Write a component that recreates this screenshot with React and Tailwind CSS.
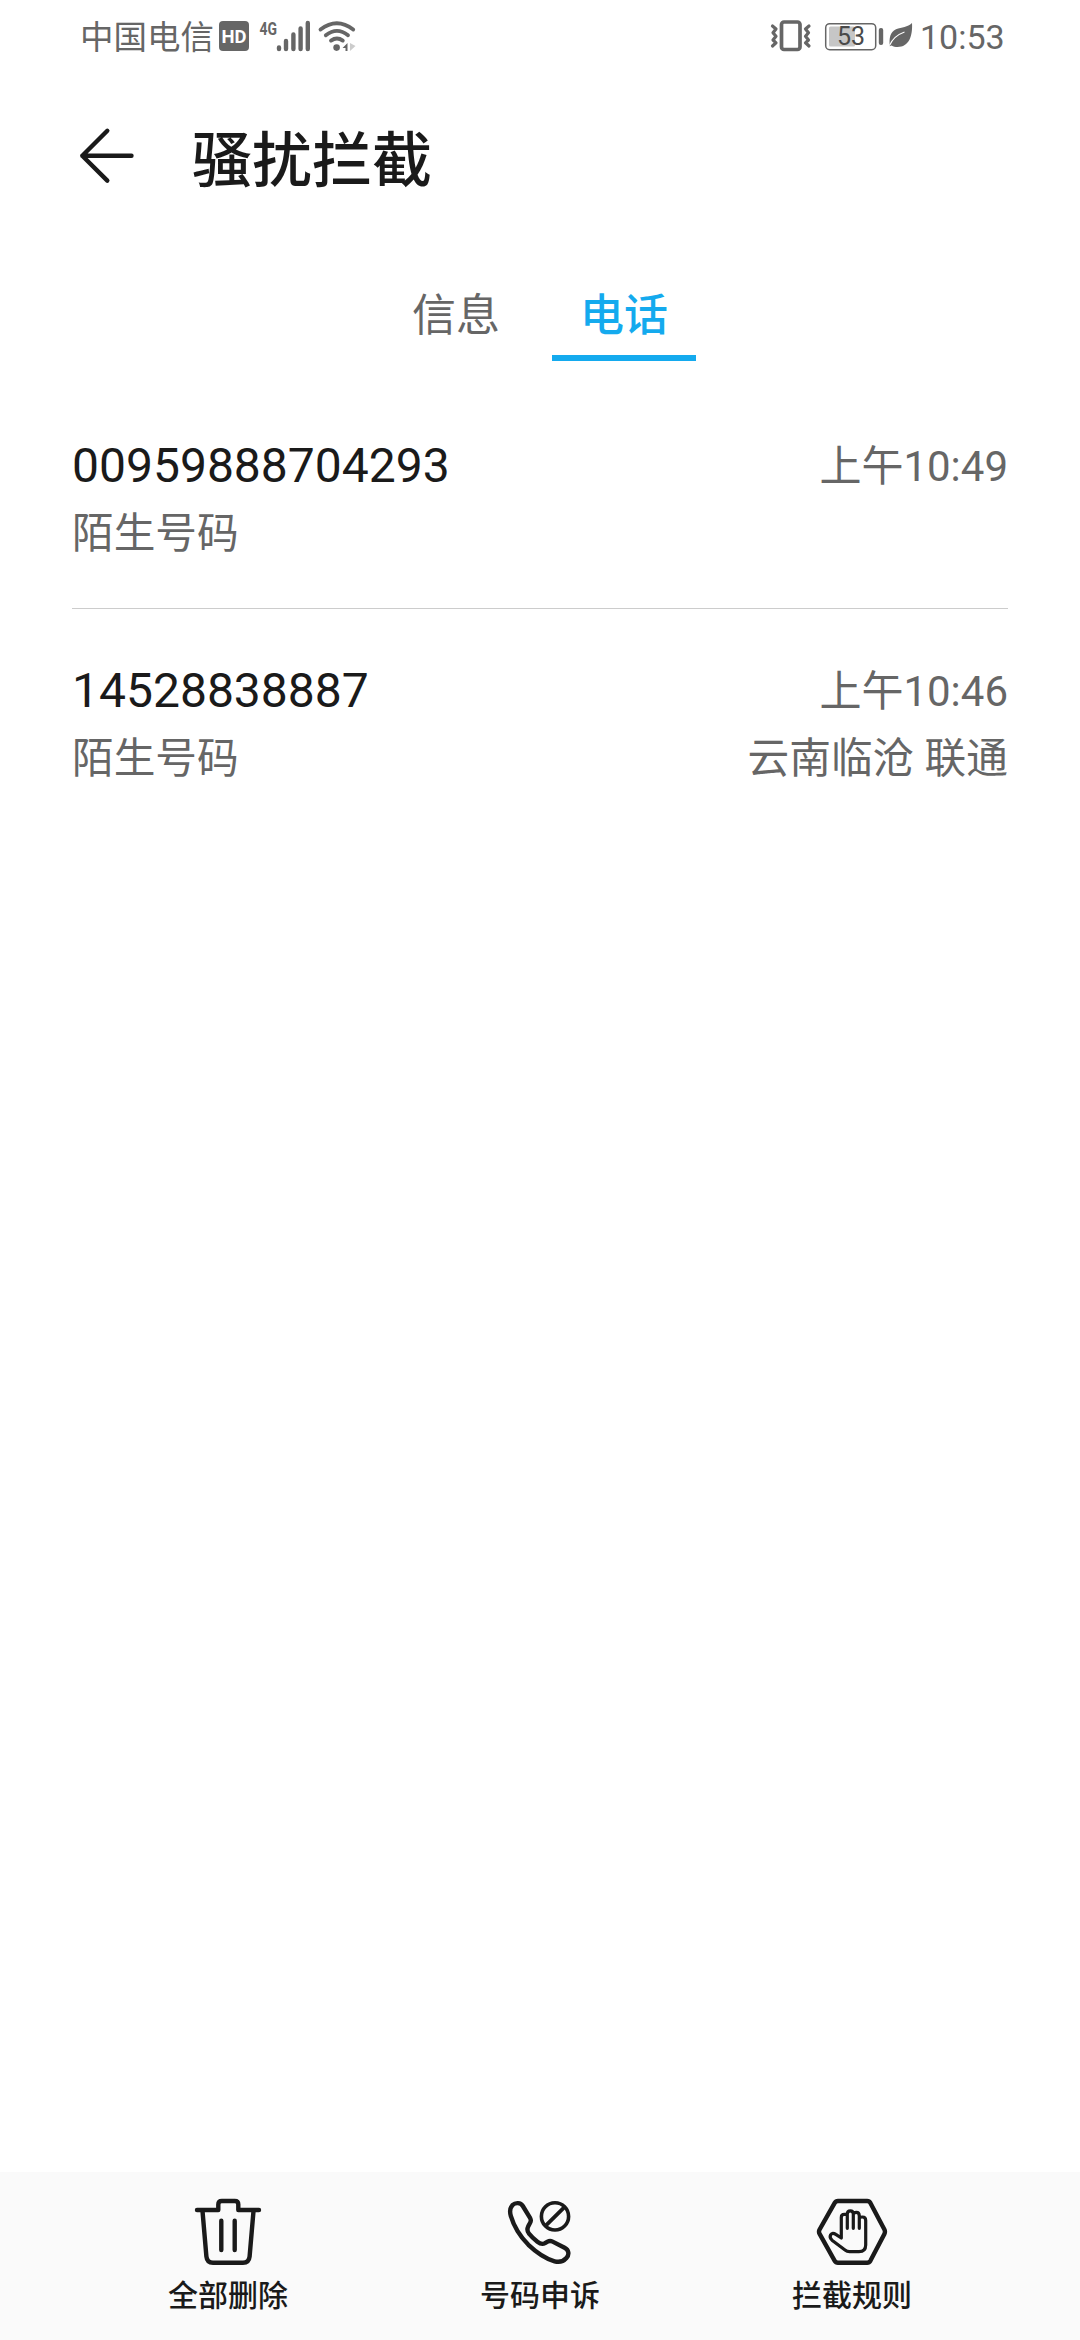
import React, { useState } from 'react';

const tabs = [
  { id: 'sms', label: '信息' },
  { id: 'call', label: '电话' },
];

const calls = [
  { number: '00959888704293', type: '陌生号码', time: '上午10:49', place: '' },
  { number: '14528838887', type: '陌生号码', time: '上午10:46', place: '云南临沧 联通' },
];

const TrashIcon = () => (
  <svg className="size-[72px]" viewBox="0 0 72 72" fill="none" stroke="currentColor" strokeWidth="4.4" strokeLinecap="round" strokeLinejoin="round">
    <path d="M5 14H26.3V8.5Q26.3 5 29.8 5H42.8Q46.3 5 46.3 8.5V14H67" />
    <path d="M10.5 15L14.4 60.5Q15 66.7 21 66.7H51Q57 66.7 57.6 60.5L61.5 15" />
    <path d="M29.3 24.8V54M42.7 24.8V54" />
  </svg>
);

const PhoneBlockIcon = () => (
  <svg className="size-[72px]" viewBox="0 0 72 72" fill="none" stroke="currentColor" strokeWidth="4.4" strokeLinecap="round" strokeLinejoin="round">
    <path d="M8.4 9.2C11.5 6.2 16.6 6.4 18.8 10L26.2 22.2Q27.5 24.6 26 27L24.2 30.4C23 33 23 35.2 25 37.6Q28.6 42 33.4 45.8C36 47.8 38.5 48.6 41 47.2L43.6 45.6Q46 44.3 48.6 45.6L60.6 51.8C64.8 54 65.6 58.4 62.4 62C59.4 65.4 55.4 66.6 50.6 65.3C42 62.8 33 57 24.4 48.8C15.6 39.8 9.6 29.4 6.8 19.8C5.6 15.6 6 11.8 8.4 9.2Z" />
    <circle cx="51" cy="20.4" r="13.6" strokeWidth="3.6" />
    <path d="M42 29.3L60.2 11.3" strokeWidth="3.8" />
  </svg>
);

const HandIcon = () => (
  <svg className="size-[72px]" viewBox="0 0 72 72" fill="none" stroke="currentColor" strokeLinecap="round" strokeLinejoin="round">
    <path strokeWidth="4.4" d="M22 5H51.2Q53.3 5 54.4 6.9L68.4 33.5Q69.5 35.7 68.4 37.9L54.4 64.8Q53.3 66.7 51.2 66.7H22Q19.8 66.7 18.7 64.8L3.6 37.9Q2.4 35.7 3.6 33.5L18.7 6.9Q19.8 5 22 5Z" />
    <path strokeWidth="3.2" d="M25.3 42V21.4Q25.3 18.4 28.3 18.4H31.3M31.3 32.3V18Q31.3 14.8 34.3 14.8T37.3 18V32.3M37.3 18Q37.8 16.4 40.3 16.4Q43.3 16.4 43.3 20V32.3M43.3 21.8Q44 21 46.5 21Q49.7 21 49.7 24.4V49Q49.7 55.6 43 55.6H33.6Q31 55.6 29 54L16 44.2Q13.2 41.6 14.6 38.8Q16.4 36 19.8 38.4L25.3 42" />
  </svg>
);

const actions = [
  { label: '全部删除', Icon: TrashIcon },
  { label: '号码申诉', Icon: PhoneBlockIcon },
  { label: '拦截规则', Icon: HandIcon },
];

const SignalIcons = () => (
  <svg className="h-[72px] w-[142px]" viewBox="216 0 142 72" fill="#666666">
    <rect x="219" y="21" width="30" height="30" rx="4" />
    <text x="234" y="43" fill="#ffffff" fontSize="19" fontWeight="700" textAnchor="middle" textLength="25" lengthAdjust="spacingAndGlyphs">HD</text>
    <text x="259.5" y="34.5" fontSize="19" fontWeight="700" textLength="17.5" lengthAdjust="spacingAndGlyphs">4G</text>
    <g stroke="#666666" strokeWidth="4.4" strokeLinecap="round">
      <path d="M279 47.5V49M286 41V49M293.4 34.5V49M300.6 28.5V49M307.8 23V49" />
    </g>
    <g fill="none" stroke="#666666" strokeWidth="3.8" strokeLinecap="round">
      <path d="M320.5 29.5Q336.8 17 353.2 29.5" />
      <path d="M325.8 35.3Q337 26.5 348 35.3" />
      <path d="M331 40.6Q337 36.5 342.8 40.6" />
    </g>
    <circle cx="336.6" cy="47.6" r="3.3" />
    <path d="M342.5 48L347.5 43V51H345.5V48Z" />
    <path d="M350 43L355.5 46L350 51Z" fill="#cccccc" />
  </svg>
);

const PowerIcons = () => (
  <svg className="h-[72px] w-[152px]" viewBox="768 0 152 72" fill="#666666">
    <g fill="none" stroke="#666666" strokeLinejoin="round" strokeLinecap="round">
      <rect x="781.5" y="22" width="18.5" height="27.5" rx="2.5" strokeWidth="3.7" />
      <path strokeWidth="3.2" d="M772.5 26L776 29L773 32.7L776 36.3L773 40L776 42.8L772.5 46" />
      <path strokeWidth="3.2" d="M809 26L805.5 29L808.5 32.7L805.5 36.3L808.5 40L805.5 42.8L809 46" />
      <rect x="825.7" y="23.7" width="50" height="26" rx="4" strokeWidth="1.5" />
    </g>
    <rect x="829" y="26.5" width="26" height="20" rx="1.5" fill="#c6c6c6" />
    <rect x="878.8" y="28" width="4.4" height="17" rx="2" />
    <text x="851" y="45" fill="#4a4a4a" fontSize="25" textAnchor="middle">53</text>
    <path d="M912 23C912.8 36 909 47 897.5 47C895.5 47 893.2 46.4 891.6 45.4L889.8 46.2C889 38 890 32 896 29.2C902 27 907.5 27.5 912 23Z" />
    <path d="M889.5 45.5C892.5 38.5 897.5 34.500 904.500 32" fill="none" stroke="#ffffff" strokeWidth="1.1" />
  </svg>
);

const StatusBar = () => (
  <div className="flex h-[72px] items-center justify-between pr-[74px] pl-20 text-[#666666]">
    <div className="flex items-center">
      <span className="w-[136px] pt-[3px] text-[33.5px] leading-[72px]">中国电信</span>
      <SignalIcons />
    </div>
    <div className="flex items-center">
      <PowerIcons />
      <span className="w-[86px] pt-0.5 text-[34px] leading-[72px]">10:53</span>
    </div>
  </div>
);

const App = () => {
  const [activeTab, setActiveTab] = useState('call');

  return (
    <div className="flex h-[2340px] w-[1080px] flex-col bg-white font-['Roboto','Noto_Sans_CJK_SC',sans-serif] text-[#1a1a1a]">
      <StatusBar />

      <header className="flex h-[168px] items-center pl-[72px]">
        <button type="button" aria-label="返回">
          <svg className="size-[72px]" viewBox="0 0 72 72" fill="none" stroke="currentColor" strokeWidth="4.4" strokeLinecap="round" strokeLinejoin="round">
            <path d="M35.3 10.8L10.3 35.7L35.3 60.6M10.3 35.7H59.5" />
          </svg>
        </button>
        <h1 className="ml-12 pt-3 text-[60px] leading-[80px] font-medium">骚扰拦截</h1>
      </header>

      <nav className="flex h-[121px] items-end justify-center gap-6">
        {tabs.map(tab => (
          <button
            key={tab.id}
            type="button"
            onClick={() => setActiveTab(tab.id)}
            className={`h-[88px] w-36 border-b-[6px] pt-1 text-[44px] leading-[78px] ${
              activeTab === tab.id ? 'border-[#14aaee] font-medium text-[#14aaee]' : 'border-transparent text-[#666666]'
            }`}
          >
            {tab.label}
          </button>
        ))}
      </nav>

      <main className="flex-1 px-[72px] pt-[22px]">
        {calls.map((call, i) => (
          <div key={call.number} className={`flex h-[225px] flex-col ${i > 0 ? 'border-t border-[#cccccc] pt-[48px]' : 'pt-[49px]'}`}>
            <div className="flex h-[68px] items-center justify-between">
              <span className="text-5xl">{call.number}</span>
              <span className="text-[42px] text-[#666666]">{call.time}</span>
            </div>
            <div className="flex h-[68px] items-center justify-between text-[41.7px] text-[#666666]">
              <span>{call.type}</span>
              <span>{call.place}</span>
            </div>
          </div>
        ))}
      </main>

      <footer className="grid h-[168px] grid-cols-3 bg-[#fafafa] px-[72px] pt-6">
        {actions.map(({ label, Icon }) => (
          <button key={label} type="button" className="flex flex-col items-center">
            <Icon />
            <span className="mt-2 text-[30px] leading-10 font-medium">{label}</span>
          </button>
        ))}
      </footer>
    </div>
  );
};

export default App;
